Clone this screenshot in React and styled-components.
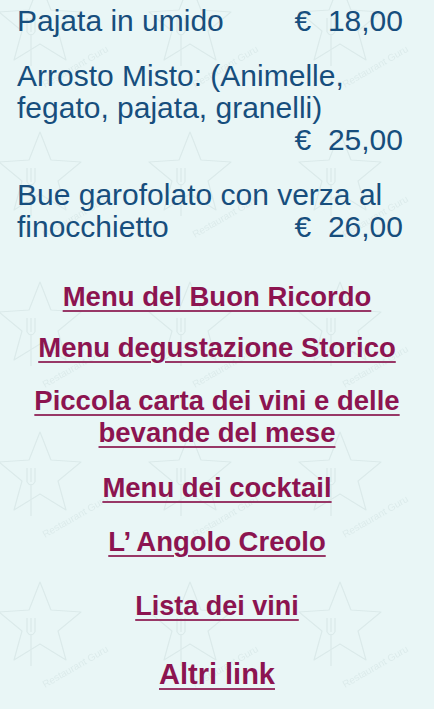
import React from "react";
import styled, { createGlobalStyle } from "styled-components";

const GlobalStyle = createGlobalStyle`
  html, body {
    margin: 0;
    padding: 0;
    background: #e9f6f6;
  }
  body {
    font-family: "Liberation Sans", Arial, Helvetica, sans-serif;
    -webkit-font-smoothing: antialiased;
  }
`;

const Page = styled.div`
  position: relative;
  min-height: 709px;
  overflow: hidden;
  background: #e9f6f6;
`;

const Watermark = styled.svg`
  position: absolute;
  inset: 0;
  width: 100%;
  height: 100%;
  pointer-events: none;
  z-index: 0;
`;

const Content = styled.div`
  position: relative;
  z-index: 1;
`;

const DishList = styled.section`
  padding: 5px 31px 0 17px;
  display: flex;
  flex-direction: column;
  gap: 23px;
`;

const Dish = styled.div`
  color: #174e7d;
  font-size: 30px;
  line-height: 32px;
`;

const PriceLine = styled.div`
  display: flex;
  justify-content: space-between;
  align-items: baseline;
`;

const Price = styled.span`
  white-space: pre;
  margin-left: auto;
`;

const LinkList = styled.nav`
  display: flex;
  flex-direction: column;
  align-items: center;
  text-align: center;
  padding-top: 38px;
  padding-bottom: 20px;
`;

const MenuLink = styled.a`
  display: block;
  margin-top: ${(p) => p.$gap}px;
  color: #8c1450;
  font-weight: 700;
  font-size: ${(p) => p.$size}px;
  line-height: 32px;
  text-decoration: underline;
  text-decoration-thickness: 2px;
  text-underline-offset: 4px;
  text-decoration-color: #983867;
  cursor: pointer;
`;

const dishes = [
  { name: "Pajata in umido", price: "€  18,00", inline: true },
  { name: "Arrosto Misto: (Animelle, fegato, pajata, granelli)", price: "€  25,00", inline: false },
  { lead: "Bue garofolato con verza al", name: "finocchietto", price: "€  26,00", inline: true },
];

const links = [
  { label: "Menu del Buon Ricordo", size: 27.5, gap: 0 },
  { label: "Menu degustazione Storico", size: 27.5, gap: 19 },
  { label: "Piccola carta dei vini e delle bevande del mese", size: 27.5, gap: 21 },
  { label: "Menu dei cocktail", size: 27.5, gap: 23 },
  { label: "L’ Angolo Creolo", size: 27.5, gap: 22 },
  { label: "Lista dei vini", size: 27, gap: 32 },
  { label: "Altri link", size: 29, gap: 36 },
];

function WatermarkPattern() {
  return (
    <Watermark aria-hidden="true">
      <defs>
        <pattern id="rg" x="-35" y="-30" width="150" height="150" patternUnits="userSpaceOnUse">
          <g fill="none" stroke="#dbeaea" strokeWidth="1.2" strokeLinejoin="round">
            <path d="M75 12 L86 40 L116 42 L93 61 L101 90 L75 74 L49 90 L57 61 L34 42 L64 40 Z" />
            <path d="M62 48 L62 62 M66 48 L66 62 M70 48 L70 62 M62 62 Q66 68 70 62 M66 64 L66 96" />
          </g>
          <text
            x="80"
            y="118"
            fontSize="10"
            fill="#dcebeb"
            fontFamily="Liberation Sans, Arial, sans-serif"
            transform="rotate(-30 80 118)"
          >
            Restaurant Guru
          </text>
        </pattern>
      </defs>
      <rect width="100%" height="100%" fill="url(#rg)" />
    </Watermark>
  );
}

export default function App() {
  return (
    <>
      <GlobalStyle />
      <Page>
        <WatermarkPattern />
        <Content>
          <DishList>
            {dishes.map((d, i) => (
              <Dish key={i}>
                {d.lead && <div>{d.lead}</div>}
                {d.inline ? (
                  <PriceLine>
                    <span>{d.name}</span>
                    <Price>{d.price}</Price>
                  </PriceLine>
                ) : (
                  <>
                    <div>{d.name}</div>
                    <PriceLine>
                      <Price>{d.price}</Price>
                    </PriceLine>
                  </>
                )}
              </Dish>
            ))}
          </DishList>
          <LinkList>
            {links.map((l, i) => (
              <MenuLink key={i} $size={l.size} $gap={l.gap}>
                {l.label}
              </MenuLink>
            ))}
          </LinkList>
        </Content>
      </Page>
    </>
  );
}
